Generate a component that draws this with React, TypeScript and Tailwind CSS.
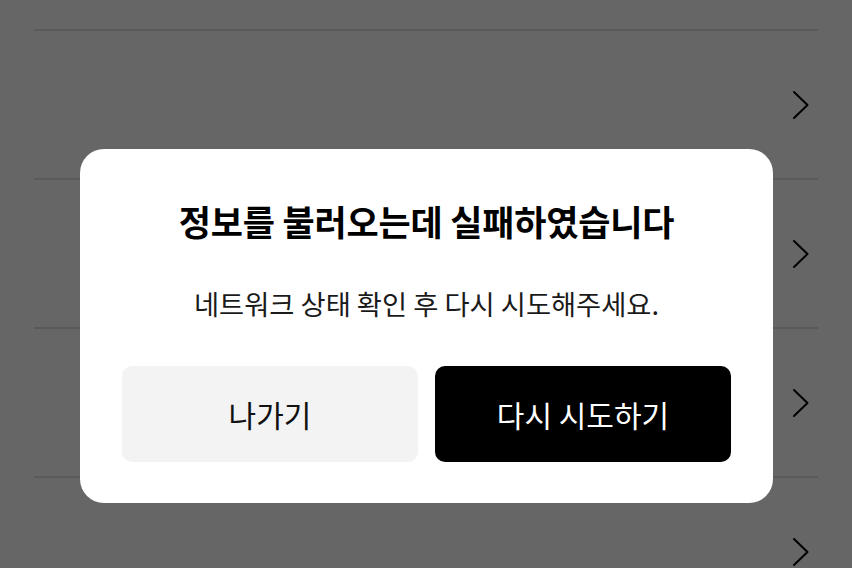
const rows = [0, 1, 2, 3]

const Chevron = () => (
  <svg width="18" height="30" viewBox="0 0 18 30" fill="none" className="text-black">
    <path d="M2 2 L15.5 15 L2 28" stroke="currentColor" strokeWidth="2" strokeLinecap="round" strokeLinejoin="round" />
  </svg>
)

export default function App() {
  return (
    <div className="relative h-[568px] w-[852px] overflow-hidden bg-[#666666] font-['Noto_Sans_CJK_KR',sans-serif]">
      {/* list behind the dimmed overlay */}
      <div className="flex flex-col px-[34px]">
        <div className="h-[31px] border-b-2 border-[#5a5a5a]" />
        {rows.map((r) => (
          <div key={r} className="flex h-[149px] items-center justify-end border-b-2 border-[#5a5a5a] pr-[8px]">
            <Chevron />
          </div>
        ))}
      </div>

      {/* dialog */}
      <div className="absolute inset-0 flex items-start justify-center pt-[149px] pl-[1px]">
        <div className="flex w-[693px] flex-col items-center rounded-[24px] bg-white px-[42px] pt-[51px] pb-[41px]">
          <h2 className="text-[35px] font-semibold leading-[42px] tracking-[-0.2px] text-black">정보를 불러오는데 실패하였습니다</h2>
          <p className="mt-[44px] text-[27.3px] leading-[34px] text-[#1a1a1a]">네트워크 상태 확인 후 다시 시도해주세요.</p>
          <div className="mt-[46px] flex w-full gap-[17px]">
            <button className="flex h-[96px] flex-1 items-center justify-center rounded-[10px] bg-[#f3f3f3] text-[30px] text-[#111111]">
              나가기
            </button>
            <button className="flex h-[96px] flex-1 items-center justify-center rounded-[10px] bg-black text-[30px] text-white">
              다시 시도하기
            </button>
          </div>
        </div>
      </div>
    </div>
  )
}
